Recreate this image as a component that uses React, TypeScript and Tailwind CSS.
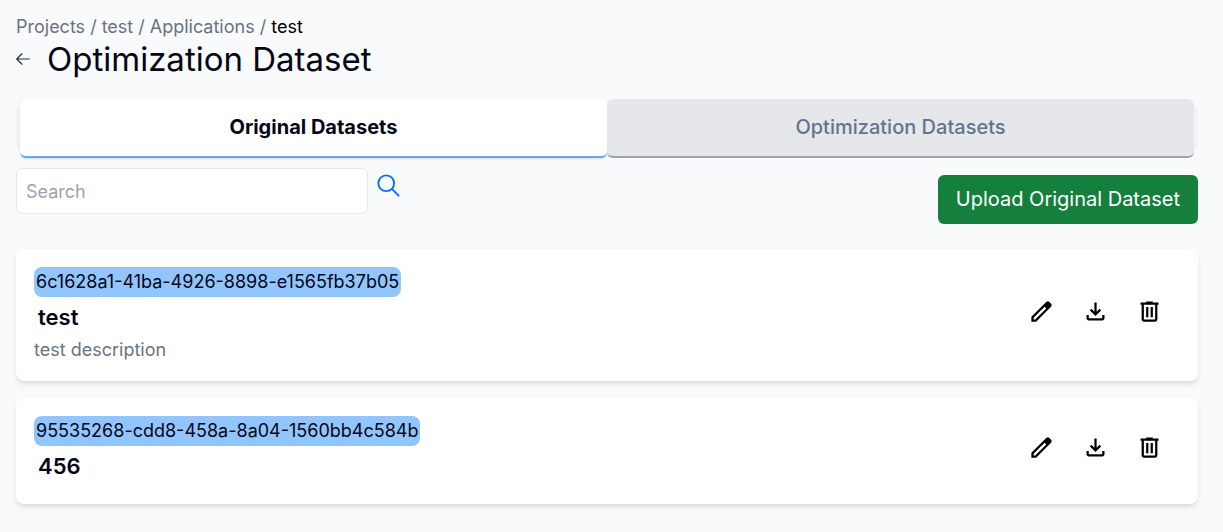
import React from "react";

const BACK = "M10.5 19.5L3 12m0 0l7.5-7.5M3 12h18";
const SEARCH = "M21 21l-6-6m2-5a7 7 0 11-14 0 7 7 0 0114 0z";
const EDIT =
  "M200-200h57l391-391-57-57-391 391v57Zm-80 80v-170l528-527q12-11 26.5-17t30.5-6q16 0 31 6t26 18l55 56q12 11 17.5 26t5.5 30q0 16-5.5 30.5T817-647L290-120H120Zm640-584-56-56 56 56Zm-141 85-28-29 57 57-29-28Z";
const DOWNLOAD =
  "M480-320 280-520l56-58 104 104v-326h80v326l104-104 56 58-200 200ZM240-160q-33 0-56.5-23.5T160-240v-120h80v120h480v-120h80v120q0 33-23.5 56.5T720-160H240Z";
const TRASH =
  "M280-120q-33 0-56.5-23.5T200-200v-520h-40v-80h200v-40h240v40h200v80h-40v520q0 33-23.5 56.5T680-120H280Zm400-600H280v520h400v-520ZM360-280h80v-360h-80v360Zm160 0h80v-360h-80v360Z";

type Dataset = { id: string; name: string; description?: string };

const datasets: Dataset[] = [
  { id: "6c1628a1-41ba-4926-8898-e1565fb37b05", name: "test", description: "test description" },
  { id: "95535268-cdd8-458a-8a04-1560bb4c584b", name: "456" },
];

function IconButton({ label, path }: { label: string; path: string }) {
  return (
    <button type="button" aria-label={label} className="cursor-pointer text-black">
      <svg viewBox="0 -960 960 960" className="block size-[27px]" fill="currentColor" aria-hidden="true">
        <path d={path} />
      </svg>
    </button>
  );
}

function DatasetCard({ dataset }: { dataset: Dataset }) {
  return (
    <li className="flex items-center justify-between rounded-lg bg-white p-[18px] shadow-md">
      <div className="flex flex-col items-start">
        <span className="rounded-lg bg-[#93c5fd] px-[2px] text-[18px] leading-[30px]">{dataset.id}</span>
        <h2 className="px-1 text-[22px] leading-[40px] font-semibold">{dataset.name}</h2>
        {dataset.description ? (
          <p className="text-[18px] leading-[26px] text-[#6b7280]">{dataset.description}</p>
        ) : null}
      </div>
      <div className="flex gap-[27px] pr-[17px] pb-2">
        <IconButton label="Edit dataset" path={EDIT} />
        <IconButton label="Download dataset" path={DOWNLOAD} />
        <IconButton label="Delete dataset" path={TRASH} />
      </div>
    </li>
  );
}

export default function App() {
  return (
    <main className="min-h-screen bg-[#f9fafc] pt-[13px] pr-[25px] pb-7 pl-4 font-['Inter',sans-serif] text-[18px] text-[#020617]">
      <nav aria-label="Breadcrumb" className="flex gap-[5px] leading-[27px] text-[#6b7280]">
        <a href="#projects">Projects</a>
        <span>/</span>
        <a href="#test">test</a>
        <span>/</span>
        <a href="#applications">Applications</a>
        <span>/</span>
        <span aria-current="page" className="text-black">test</span>
      </nav>
      <header className="flex items-center gap-[17px]">
        <a href="#back" aria-label="Back" className="text-[#1f2937]">
          <svg viewBox="2 2 20 20" className="block size-[14px]" fill="none" stroke="currentColor" strokeWidth="1.6" strokeLinecap="round" strokeLinejoin="round" aria-hidden="true">
            <path d={BACK} />
          </svg>
        </a>
        <h1 className="text-[33px] leading-[38px]">Optimization Dataset</h1>
      </header>

      <div role="tablist" className="mt-[28px] flex h-[45px] items-center rounded-md bg-[#f1f5f9] px-1">
        <button
          type="button"
          role="tab"
          aria-selected="true"
          className="h-[59px] flex-1 cursor-pointer rounded-md border-b-2 border-[#60a5fa] bg-white pb-[2px] text-[20px] font-bold shadow-sm"
        >
          Original Datasets
        </button>
        <button
          type="button"
          role="tab"
          aria-selected="false"
          className="h-[59px] flex-1 cursor-pointer rounded-md border-b-2 border-[#9ca3af] bg-[#e5e7eb] pb-[2px] text-[20px] font-medium text-[#64748b]"
        >
          Optimization Datasets
        </button>
      </div>

      <div className="mt-[17px] flex items-end justify-between">
        <form className="mb-[10px] flex items-start gap-[7px]">
          <input
            type="text"
            aria-label="Search"
            placeholder="Search"
            className="h-[46px] w-[352px] rounded-md border border-[#e2e8f0] bg-white px-[9px] text-[18px] placeholder:text-[#9ca3af]"
          />
          <button type="button" aria-label="Search datasets" className="mt-1 cursor-pointer text-[#0d6efd]">
            <svg viewBox="0 0 24 24" className="block size-[27px]" fill="none" stroke="currentColor" strokeWidth="1.7" strokeLinecap="round" aria-hidden="true">
              <path d={SEARCH} />
            </svg>
          </button>
        </form>
        <button type="button" className="h-[49px] cursor-pointer rounded-md bg-[#15803d] px-[18px] pb-[2px] text-[20px] text-white">
          Upload Original Dataset
        </button>
      </div>

      <ul className="mt-[25px] flex flex-col gap-[17px]">
        {datasets.map((dataset) => (
          <DatasetCard key={dataset.id} dataset={dataset} />
        ))}
      </ul>
    </main>
  );
}
